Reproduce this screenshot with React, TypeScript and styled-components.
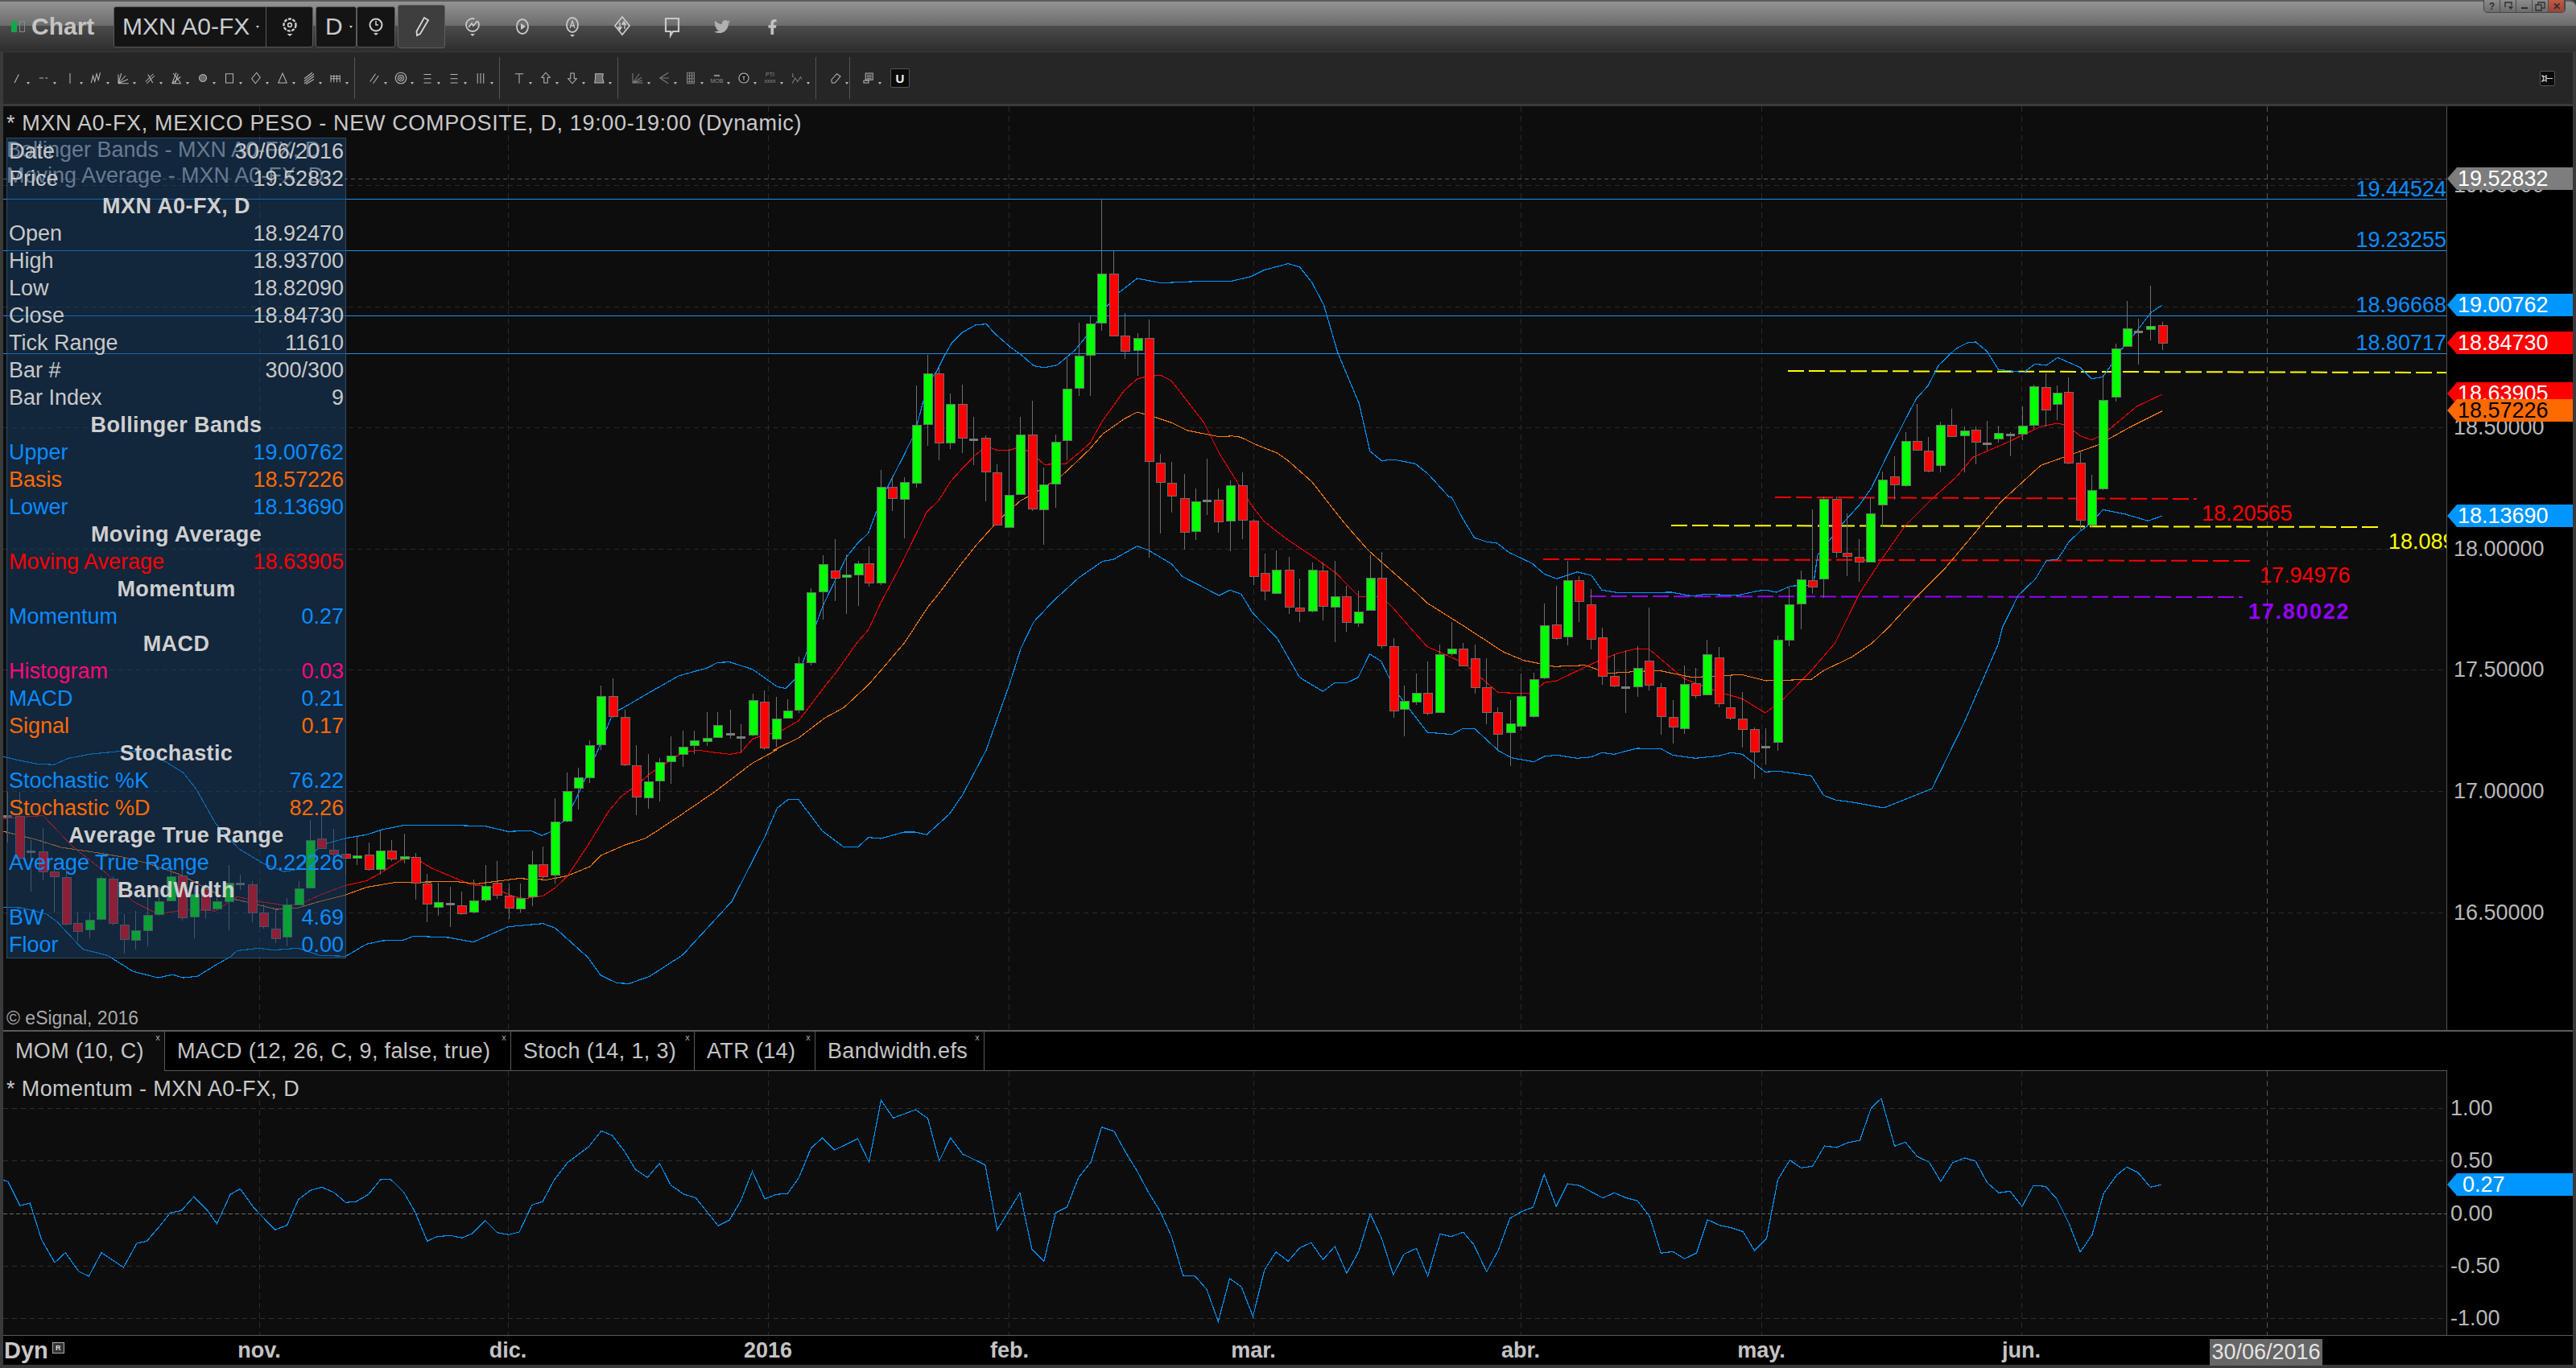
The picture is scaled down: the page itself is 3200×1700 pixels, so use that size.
import React from 'react';
import styled, { createGlobalStyle } from 'styled-components';
import { FaTwitter, FaFacebookF } from 'react-icons/fa';

const Global = createGlobalStyle`
  html, body { margin: 0; padding: 0; background: #3a3a3a; }
  body { font-family: "Liberation Sans", Arial, sans-serif; }
`;

/* ---------- chart data, read off in crops of the picture ---------- */
const seg = (x0: number, y0: number, sx: number, sy: number) => (p: number[]) => {
  const out: [number, number][] = [];
  for (let i = 0; i < p.length; i += 2) out.push([x0 + p[i] / sx, y0 + p[i + 1] / sy]);
  return out;
};
const zA = seg(0, 640, 2.24, 2.53);
const zB = seg(200, 820, 1.96, 3);
const zC = seg(960, 320, 1.867, 2.119);
const zD = seg(1500, 600, 1.96, 3);
const zE = seg(2100, 340, 1.425, 3);
const zF = seg(0, 1250, 1.206, 3);
const zG = seg(1290, 1340, 2.45, 3);
const zH = seg(1900, 1250, 1.206, 3);
const pts = (a: [number, number][]) => a.map(([x, y]) => `${x.toFixed(1)},${y.toFixed(1)}`).join(' ');

const upper = pts([
  ...zA([10,760,40,768,100,782,150,785,190,765,250,752,340,742,400,745,460,775,510,810,545,860,600,970]),
  ...zB([190,705,250,760,300,790,335,780,390,690,450,665,500,652,540,632,590,617,720,617,790,620,845,640,900,637,928,655,950,640,985,595,1010,520,1060,350,1100,200,1130,175,1180,130,1260,60,1330,30,1355,10,1385,8,1440,35,1500,100]),
  ...zC([30,1135,60,1100,90,1000,115,920,170,790,195,755,222,725,250,640,300,530,330,460,360,330,380,300,400,255,415,225,440,197,470,178,495,175,515,200,550,235,580,260,605,285,630,290,660,283,700,245,740,190,770,135,800,95,845,55,900,67,1000,62,1065,62,1110,50,1140,33,1195,16,1222,25,1250,65,1278,125,1310,250,1360,385,1385,510,1412,535,1440,532,1490,543,1520,570,1568,630]),
  ...zD([595,55,620,130,650,205,680,220,705,225,735,260,790,300,820,340,850,358,900,332,935,345,960,400,1000,410,1130,408,1180,422,1215,415,1290,420,1340,403,1360,400,1385,408,1420,385,1475,380]),
  ...zE([225,1050,270,930,300,860,320,800,350,670,380,545,400,465,420,420,440,340,470,280,490,258,505,255,525,290,545,358,590,368,610,337,630,342,650,313,690,350,710,392,730,385,745,340,760,290,790,215,815,145,835,118]),
]);
const lower = pts([
  ...zA([10,1233,60,1235,130,1255,160,1280,230,1365,300,1385,370,1435,440,1455,480,1445,510,1455,550,1450,600,1415,640,1390,660,1370,720,1362,760,1368,830,1362,890,1385]),
  ...zB([450,1105,500,1060,540,1047,590,1045,615,1030,700,1035,760,1052,845,995,930,983,960,1000,1040,1110,1070,1175,1110,1205,1140,1207,1190,1180,1270,1100,1360,950,1390,900,1470,660]),
  ...zC([10,1450,35,1428,60,1428,85,1465,115,1510,165,1553,197,1553,222,1527,250,1530,305,1513,330,1513,357,1520,410,1465,440,1415,495,1297,550,1120,575,1030,605,960,650,905,710,843,765,800,790,795,845,760,870,770,925,807,950,840,1035,890]),
  ...zD([55,400,82,415,110,485,170,580,224,725,281,778,310,745,340,745,367,725,395,638,423,665,440,720,465,790,535,930,595,938,622,916,650,916,708,998,740,1025,795,1040,820,1020,850,1015,900,1027,935,1022,960,1006,990,1012,1045,990,1105,992,1132,1015,1188,1027,1245,1018,1275,1006,1302,1012,1358,1078,1390,1075,1470,1092,1500,1165,1530,1183,1568,1190]),
  [2340,1004],[2400,980],[2440,898],
  ...zE([545,1380,552,1320,580,1200,610,1140,630,1070,650,1065,670,1000,690,960,710,930,730,880,770,897,810,922,835,903]),
]);
const maRed = pts([
  ...zA([0,955,120,945,200,1040,300,1130,370,1215,440,1255,520,1240,600,1245,660,1200,720,1215,780,1225,830,1225,900,1190,960,1165,1020,1150,1060,1125,1115,1085,1150,1075,1200,1110,1310,1162,1370,1170,1430,1200]),
  ...zB([885,890,930,880,960,850,990,805,1040,690,1090,565,1120,510,1160,465,1190,425,1230,385,1270,345,1310,337,1345,345,1385,352,1412,345,1440,295,1470,280,1510,265]),
  ...zC([60,1220,120,1130,145,1095,195,1015,222,980,250,910,297,810,357,670,385,640,412,590,440,555,470,520,495,497,520,507,550,507,575,498,605,520,630,545,680,543,735,490,765,430,815,350,845,320,870,313,900,310,925,325,1000,435,1035,515,1115,660,1140,695,1190,740,1250,785,1305,830,1360,893,1412,893,1440,925,1490,990,1518,1025,1568,1050]),
  ...zD([622,670,708,782,790,785,820,745,850,738,940,672,1000,635,1045,618,1075,620,1160,730,1245,780,1302,805,1358,858,1400,810,1470,700]),
  ...zE([255,1380,300,1190,340,1060,380,940,430,835,470,760,500,685,560,630,620,570,650,558,665,565,690,605,710,620,730,600,770,530,790,495,835,450]),
]);
const basis = pts([
  ...zA([10,995,100,1020,170,1045,260,1060,340,1075,410,1095,500,1130,620,1200,680,1215,770,1240,830,1235,890,1215,960,1195,1020,1170,1100,1155,1250,1153]),
  ...zB([720,827,770,835,870,815,940,820,990,805,1045,770,1070,730,1130,690,1180,665,1240,605,1350,490,1440,385,1500,335]),
  ...zC([0,1298,60,1265,120,1213,165,1185,222,1125,260,1075,305,1015,360,920,385,885,435,810,470,760,525,690,575,640,600,625,665,580,735,505,765,465,815,425,845,407,885,420,925,435,960,455,1035,472,1065,470,1085,473,1115,490,1170,515,1195,535,1250,590,1305,670,1330,705,1380,770,1440,830,1490,880,1518,910]),
  ...zD([620,530,720,630,770,662,845,685,920,680,975,710,1050,703,1100,700,1180,725,1300,715,1360,738,1470,733,1500,700,1568,650]),
  ...zE([320,1380,350,1320,400,1205,450,1100,490,1000,550,850,620,715,680,670,720,640,780,570,835,512]),
]);
const momentum = pts([
  ...zF([5,650,12,655,30,745,45,735,62,870,82,957,98,920,118,990,133,1008,152,920,185,975,205,885,220,877,238,825,255,772,272,763,290,712,310,760,325,812,345,703,360,682,380,752,412,835,430,818,447,722,465,688,482,676,500,695,518,733,533,730,552,703,570,648,585,646,605,695,622,770,640,877,655,860,675,856,692,865,708,848,727,800,745,845,762,853,778,843,797,742,813,730,830,650,850,585,882,525,901,466,917,483,935,540,952,610,970,640,988,587,1005,668,1025,703,1042,715,1060,770,1076,820,1093,798,1110,725,1127,617,1146,720,1163,703,1180,700,1197,640,1215,530,1232,492,1250,538,1285,495,1302,583,1320,352,1338,418,1372,387,1390,420,1407,578,1424,492,1442,552,1476,593,1494,835,1528,697,1546,908]),
  ...zG([17,682,52,502,87,480,122,370,160,312,192,182,230,197,265,275,300,345,335,425,370,495,405,590,440,735,477,738,512,787,547,907,582,746,618,778,653,888,688,715,723,647,760,682,795,632,830,613,866,676,902,626,938,727,975,645,1010,505,1045,598,1080,733,1113,655,1150,634,1185,737,1222,580,1255,590,1293,574,1325,620,1364,721,1400,640,1435,522,1470,497,1505,481]),
  ...zH([22,628,40,748,57,663,75,670,110,716,127,697,145,716,162,727,180,785,197,922,215,916,232,943,250,922,267,797,285,818,302,827,320,842,337,912,355,868,372,648,390,575,407,604,424,598,442,522,460,528,477,510,495,501,512,380,527,345,547,523,563,508,581,562,599,583,616,655,634,585,652,567,668,578,686,660,703,697,720,691,738,748,755,670,773,673,790,720,808,810,825,918,843,853,860,700,880,630,895,601,912,622,930,676,947,667]),
]);

/* each candle: x, body top, body bottom, wick top, wick bottom, kind */
type Raw = [number, number, number, number, number, 'G' | 'R' | 'D'];
type Candle = { x: number; t: number; b: number; h: number; l: number; k: 'G' | 'R' | 'D' };
const cs = (x0: number, y0: number, sx: number, sy: number, raw: Raw[]): Candle[] =>
  raw.map(([x, t, b, h, l, k]) => ({ x: x0 + x / sx, t: y0 + t / sy, b: y0 + b / sy, h: y0 + h / sy, l: y0 + l / sy, k }));

const candles: Candle[] = [
  ...cs(0, 640, 2.24, 2.53, [
    [20,945,945,870,1030,'D'],[53,947,1080,870,1085,'R'],[86,1058,1058,1020,1185,'D'],[118,1058,1122,985,1148,'R'],[151,1123,1137,1095,1250,'R'],[183,1140,1286,1100,1290,'R'],[216,1283,1309,1250,1340,'R'],[248,1273,1303,1250,1330,'G'],[281,1142,1272,1135,1275,'G'],[313,1145,1285,1135,1290,'R'],[345,1288,1334,1255,1380,'R'],[377,1306,1336,1245,1365,'G'],[409,1258,1308,1195,1355,'G'],[442,1215,1255,1170,1260,'G'],[474,1137,1213,1105,1215,'G'],[507,1134,1266,1100,1275,'R'],[539,1192,1263,1170,1330,'G'],[571,1177,1240,1160,1270,'R'],[603,1215,1238,1190,1240,'G'],[636,1157,1215,1100,1305,'G'],[668,1158,1158,1130,1180,'D'],[702,1162,1252,1150,1280,'R'],[733,1250,1295,1225,1300,'R'],[765,1301,1331,1240,1345,'R'],[798,1226,1326,1205,1357,'G'],[830,1174,1225,1150,1228,'G'],[863,1023,1172,960,1175,'G'],
  ]),
  ...cs(200, 820, 1.96, 3, [
    [391,667,703,565,705,'R'],[420,709,725,630,745,'R'],[448,724,739,680,800,'R'],[477,731,737,655,765,'G'],[505,727,781,680,785,'R'],[534,712,781,635,800,'G'],[561,712,743,672,750,'R'],[591,734,742,648,760,'G'],[619,737,832,720,895,'R'],[646,835,910,798,978,'R'],[675,904,922,830,955,'G'],[703,908,908,847,995,'D'],[732,916,946,865,950,'R'],[760,899,940,818,945,'G'],[789,845,895,765,902,'G'],[817,832,877,750,890,'R'],[846,880,925,835,965,'R'],[874,890,928,835,942,'G'],[903,764,884,710,918,'G'],[930,764,808,695,815,'R'],[959,605,802,515,835,'G'],[987,491,601,420,605,'G'],[1016,439,478,402,558,'G'],[1043,320,438,300,458,'G'],[1071,136,316,97,335,'G'],[1100,137,211,70,215,'R'],[1128,214,391,185,395,'R'],[1157,394,511,318,578,'R'],[1185,454,514,350,555,'G'],[1214,383,451,365,528,'G'],[1241,358,379,285,462,'G'],[1270,325,352,265,398,'G'],[1298,302,319,265,350,'G'],[1328,292,304,195,320,'G'],[1355,244,288,195,290,'G'],[1385,275,275,185,295,'D'],[1412,287,287,240,345,'D'],[1440,152,280,127,285,'G'],[1469,157,328,115,335,'R'],[1497,220,295,138,325,'G'],[1525,190,217,147,220,'G'],
  ]),
  ...cs(960, 320, 1.867, 2.119, [
    [60,1069,1192,1050,1200,'G'],[88,882,1067,870,1075,'G'],[115,808,880,785,953,'G'],[143,825,844,742,905,'R'],[169,836,842,782,938,'G'],[197,806,836,798,917,'G'],[223,806,857,760,866,'R'],
  ]),
  ...cs(600, 230, 1.568, 3, [
    [775,1127,1483,1062,1490,'G'],[797,1127,1168,1085,1215,'R'],[820,1108,1171,1090,1316,'G'],[843,896,1111,748,1128,'G'],[865,703,892,633,971,'G'],[888,703,961,680,1025,'R'],[910,817,961,778,983,'G'],[933,817,943,744,998,'R'],[955,947,947,865,1043,'D'],[979,943,1069,933,1180,'R'],[1001,1072,1267,1040,1270,'R'],[1024,1156,1276,985,1276,'G'],[1046,931,1153,865,1153,'G'],[1070,931,1207,805,1215,'R'],[1092,1117,1210,1053,1340,'G'],[1115,958,1114,930,1203,'G'],[1137,760,952,640,1025,'G'],[1160,637,757,513,785,'G'],[1183,517,634,490,785,'G'],[1205,331,514,52,543,'G'],[1228,331,562,245,565,'R'],[1250,562,619,478,648,'R'],[1274,571,616,553,710,'G'],[1296,571,1030,502,1390,'R'],[1319,1036,1108,1003,1300,'R'],[1341,1111,1159,1033,1220,'R'],[1365,1168,1294,1078,1358,'R'],[1387,1180,1291,1132,1322,'G'],[1410,1176,1176,1020,1230,'D'],[1432,1175,1255,1130,1295,'R'],[1455,1120,1252,1100,1365,'G'],[1478,1120,1248,1072,1320,'R'],[1500,1252,1460,1245,1490,'R'],
  ]),
  ...cs(1500, 600, 1.96, 3, [
    [139,337,403,265,437,'R'],[167,325,412,252,412,'G'],[197,325,463,276,488,'R'],[224,466,479,357,518,'R'],[254,325,479,297,482,'G'],[281,328,460,297,512,'R'],[310,424,463,291,593,'G'],[338,424,520,384,554,'R'],[367,482,523,403,537,'G'],[395,355,475,266,478,'G'],[424,355,607,258,617,'R'],[452,610,850,578,875,'R'],[479,814,844,756,944,'G'],[508,784,817,711,828,'G'],[536,784,859,667,868,'R'],[565,640,856,603,856,'G'],[593,619,637,519,644,'G'],[622,619,682,598,684,'R'],[650,655,763,603,785,'R'],[679,763,856,654,900,'R'],[706,856,937,838,998,'R'],[736,898,931,810,1055,'G'],[763,796,907,710,924,'G'],[793,733,871,708,875,'G'],[820,532,727,450,732,'G'],[848,529,580,385,584,'R'],[877,364,574,290,605,'G'],[904,364,442,348,518,'R'],[933,454,583,396,620,'R'],[961,577,721,541,752,'R'],[990,721,757,640,763,'R'],[1018,762,762,625,857,'D'],[1047,691,760,610,797,'G'],[1075,664,754,465,773,'R'],[1104,763,871,747,938,'R'],[1132,874,910,810,971,'R'],[1161,751,916,681,935,'G'],[1188,748,793,690,805,'R'],[1216,640,790,586,790,'G'],[1245,652,823,613,836,'R'],[1272,838,877,716,884,'R'],[1302,880,919,781,986,'R'],[1330,919,1003,913,1103,'R'],[1359,984,984,915,1050,'D'],[1387,586,967,570,998,'G'],[1415,454,586,388,608,'G'],[1444,361,451,327,547,'G'],[1472,364,388,98,415,'R'],[1500,61,358,50,428,'G'],[1530,61,259,50,280,'R'],[1557,262,274,115,347,'R'],
  ]),
  ...cs(2100, 340, 1.425, 3, [
    [298,1057,1075,990,1150,'R'],[318,895,1075,835,1078,'G'],[339,769,863,738,942,'G'],[360,757,787,682,842,'R'],[380,625,790,590,795,'G'],[401,625,658,485,660,'R'],[421,661,737,610,740,'R'],[442,565,715,552,742,'G'],[462,565,607,505,610,'R'],[484,586,604,570,740,'G'],[504,584,628,570,710,'R'],[525,632,632,548,660,'D'],[545,595,616,567,630,'G'],[566,600,600,590,680,'D'],[587,568,598,495,620,'G'],[607,421,565,415,580,'G'],[628,424,508,372,570,'R'],[648,445,487,418,545,'G'],[669,442,706,388,710,'R'],[690,706,918,665,955,'R'],[710,808,937,750,945,'G'],[730,472,802,378,808,'G'],[752,280,460,260,478,'G'],[772,205,271,102,272,'G'],[793,215,215,168,340,'D'],[813,196,208,45,250,'G'],[835,193,259,180,285,'R'],
  ]),
];

const gridY = [230, 381, 531, 682, 832, 983, 1134];
const gridX = [322, 631, 954, 1253, 1557, 1889, 2188, 2511];
const fibY = [247, 311, 392, 439];
const momGridY = [1377, 1442, 1573, 1638];

type Dash = { x1: number; y1: number; x2: number; y2: number; c: string };
const dashes: Dash[] = [
  { x1: 2221, y1: 461, x2: 3039, y2: 463, c: '#ffff00' },
  { x1: 2076, y1: 653, x2: 2955, y2: 655, c: '#ffff00' },
  { x1: 2205, y1: 618, x2: 2729, y2: 620, c: '#ff0000' },
  { x1: 1917, y1: 695, x2: 2795, y2: 697, c: '#ff0000' },
  { x1: 1975, y1: 741, x2: 2786, y2: 742, c: '#9600ff' },
];
type Note = { t: string; x: number; y: number; c: string; b?: boolean; end?: boolean };
const notes: Note[] = [
  { t: '19.44524', x: 3039, y: 235, c: '#0a8cff', end: true },
  { t: '19.23255', x: 3039, y: 298, c: '#0a8cff', end: true },
  { t: '18.96668', x: 3039, y: 379, c: '#0a8cff', end: true },
  { t: '18.80717', x: 3039, y: 426, c: '#0a8cff', end: true },
  { t: '18.20565', x: 2735, y: 638, c: '#ff0000' },
  { t: '18.08953', x: 2967, y: 673, c: '#ffff00' },
  { t: '17.94976', x: 2807, y: 715, c: '#ff0000' },
  { t: '17.80022', x: 2793, y: 760, c: '#9600ff', b: true },
];

const priceLabels: [string, number][] = [['19.50000', 230], ['19.00000', 381], ['18.50000', 531], ['18.00000', 682], ['17.50000', 832], ['17.00000', 983], ['16.50000', 1134]];
const priceTags: { t: string; y: number; bg: string; fg: string }[] = [
  { t: '19.52832', y: 222, bg: '#7d7d7d', fg: '#ffffff' },
  { t: '19.00762', y: 379, bg: '#0096ff', fg: '#ffffff' },
  { t: '18.84730', y: 426, bg: '#ff0000', fg: '#ffffff' },
  { t: '18.63905', y: 489, bg: '#ff0000', fg: '#ffffff' },
  { t: '18.57226', y: 510, bg: '#ff6a00', fg: '#000000' },
  { t: '18.13690', y: 641, bg: '#0096ff', fg: '#ffffff' },
];
const momLabels: [string, number][] = [['1.00', 1377], ['0.50', 1442], ['0.00', 1508], ['-0.50', 1573], ['-1.00', 1638]];
const months: [string, number][] = [['nov.', 322], ['dic.', 631], ['2016', 954], ['feb.', 1254], ['mar.', 1557], ['abr.', 1889], ['may.', 2188], ['jun.', 2511]];

type RowKind = { kind: 'h'; label: string } | { kind: 'r'; label: string; value: string; color?: string };
const BLUE = '#0a8cff', ORG = '#ff6a00', RED = '#ff0000', PINK = '#ff0a78';
const rows: RowKind[] = [
  { kind: 'r', label: 'Date', value: '30/06/2016' },
  { kind: 'r', label: 'Price', value: '19.52832' },
  { kind: 'h', label: 'MXN A0-FX, D' },
  { kind: 'r', label: 'Open', value: '18.92470' },
  { kind: 'r', label: 'High', value: '18.93700' },
  { kind: 'r', label: 'Low', value: '18.82090' },
  { kind: 'r', label: 'Close', value: '18.84730' },
  { kind: 'r', label: 'Tick Range', value: '11610' },
  { kind: 'r', label: 'Bar #', value: '300/300' },
  { kind: 'r', label: 'Bar Index', value: '9' },
  { kind: 'h', label: 'Bollinger Bands' },
  { kind: 'r', label: 'Upper', value: '19.00762', color: BLUE },
  { kind: 'r', label: 'Basis', value: '18.57226', color: ORG },
  { kind: 'r', label: 'Lower', value: '18.13690', color: BLUE },
  { kind: 'h', label: 'Moving Average' },
  { kind: 'r', label: 'Moving Average', value: '18.63905', color: RED },
  { kind: 'h', label: 'Momentum' },
  { kind: 'r', label: 'Momentum', value: '0.27', color: BLUE },
  { kind: 'h', label: 'MACD' },
  { kind: 'r', label: 'Histogram', value: '0.03', color: PINK },
  { kind: 'r', label: 'MACD', value: '0.21', color: BLUE },
  { kind: 'r', label: 'Signal', value: '0.17', color: ORG },
  { kind: 'h', label: 'Stochastic' },
  { kind: 'r', label: 'Stochastic %K', value: '76.22', color: BLUE },
  { kind: 'r', label: 'Stochastic %D', value: '82.26', color: ORG },
  { kind: 'h', label: 'Average True Range' },
  { kind: 'r', label: 'Average True Range', value: '0.22226', color: BLUE },
  { kind: 'h', label: 'BandWidth' },
  { kind: 'r', label: 'BW', value: '4.69', color: BLUE },
  { kind: 'r', label: 'Floor', value: '0.00', color: BLUE },
];

const tabs: { t: string; w: number; active?: boolean }[] = [
  { t: 'MOM (10, C)', w: 201, active: true },
  { t: 'MACD (12, 26, C, 9, false, true)', w: 430 },
  { t: 'Stoch (14, 1, 3)', w: 228 },
  { t: 'ATR (14)', w: 150 },
  { t: 'Bandwidth.efs', w: 210 },
];

/* ---------- window ---------- */
const Window = styled.div`
  width: 3200px;
  height: 1700px;
  background: #3a3a3a;
  overflow: hidden;
  display: flex;
  flex-direction: column;
  color: #c8c8c8;
  font: 27px/1 "Liberation Sans", Arial, sans-serif;
`;
const TitleBar = styled.header`
  flex: 0 0 62px;
  height: 62px;
  border-top: 2px solid #5c5c5c;
  border-top-right-radius: 8px;
  background: linear-gradient(#939393 0, #6c6c6c 30px, #4b4b4b 30px, #2d2d2d 62px);
  display: flex;
  align-items: center;
  padding-left: 14px;
`;
const Led = styled.span<{ $on?: boolean }>`
  width: 7px;
  height: 14px;
  margin-right: 3px;
  background: ${(p) => (p.$on ? '#12a84a' : 'transparent')};
  border: 1px solid ${(p) => (p.$on ? '#12a84a' : '#8a8a8a')};
  box-sizing: border-box;
`;
const AppName = styled.span`
  font: bold 30px/1 "Liberation Sans", Arial, sans-serif;
  color: #c4c4c4;
  margin: 0 22px 0 5px;
  width: 80px;
`;
const DarkBox = styled.div<{ $w: number; $ml?: number }>`
  width: ${(p) => p.$w}px;
  height: 51px;
  margin-left: ${(p) => p.$ml ?? 0}px;
  box-sizing: border-box;
  background: #141414;
  border: 1px solid #5a5a5a;
  border-radius: 3px;
  display: flex;
  align-items: center;
  position: relative;
  font-size: 30px;
  color: #c8ccd0;
`;
const BoxLabel = styled.span<{ $w: number; $pl: number; $plain?: boolean }>`
  width: ${(p) => p.$w}px;
  padding-left: ${(p) => p.$pl}px;
  box-sizing: border-box;
  height: 100%;
  display: flex;
  align-items: center;
  border-right: ${(p) => (p.$plain ? '0' : '1px solid #5a5a5a')};
`;
const BoxIcon = styled.span`
  flex: 1;
  display: flex;
  align-items: center;
  justify-content: center;
  position: relative;
`;
const Caret = styled.i`
  display: inline-block;
  margin-left: 8px;
  width: 0;
  height: 0;
  border-left: 2.5px solid transparent;
  border-right: 2.5px solid transparent;
  border-top: 3px solid #d0d0d0;
`;
const PencilBox = styled.div`
  width: 59px;
  height: 54px;
  margin: 0 3px;
  box-sizing: border-box;
  background: #3e3e3e;
  border: 1px solid #5e5e5e;
  border-radius: 3px;
  display: flex;
  align-items: center;
  justify-content: center;
`;
const TitleIcon = styled.span`
  width: 62px;
  height: 40px;
  display: flex;
  align-items: center;
  justify-content: center;
  color: #c0c0c0;
`;
const WinButtons = styled.div`
  margin-left: auto;
  margin-right: 13px;
  align-self: flex-start;
  display: flex;
  height: 15px;
  margin-top: -2px;
  border: 1px solid #444;
  border-top: 0;
  border-radius: 0 0 5px 5px;
  overflow: hidden;
`;
const WinButton = styled.span<{ $close?: boolean }>`
  width: 20px;
  height: 15px;
  box-sizing: border-box;
  border-right: 1px solid #4c4c4c;
  background: ${(p) => (p.$close ? 'linear-gradient(#c05a48,#9a4536)' : 'linear-gradient(#8c8c8c,#6c6c6c)')};
  color: #2e2e2e;
  display: flex;
  align-items: center;
  justify-content: center;
  font: bold 12px/1 "Liberation Sans", Arial, sans-serif;
`;
const ToolBar = styled.nav`
  flex: 0 0 64px;
  margin: 1px 4px 0 4px;
  background: #262626;
  display: flex;
  align-items: center;
`;
const ToolCell = styled.span<{ $dim?: boolean }>`
  width: 33px;
  height: 40px;
  flex: none;
  display: flex;
  align-items: center;
  justify-content: center;
  position: relative;
  color: ${(p) => (p.$dim ? '#7c7c7c' : '#b4b4b4')};
  &::after {
    content: '';
    position: absolute;
    right: 0;
    bottom: 12px;
    border-left: 2.5px solid transparent;
    border-right: 2.5px solid transparent;
    border-top: 3px solid #b8b8b8;
  }
`;
const Sep = styled.span<{ $tight?: boolean }>`
  width: 1px;
  height: 52px;
  background: #555;
  flex: none;
  margin: ${(p) => (p.$tight ? '0 6px 0 1px' : '0 7px')};
`;
const UBox = styled.span`
  width: 24px;
  height: 24px;
  margin-left: 11px;
  box-sizing: border-box;
  background: #0a0a0a;
  border: 1px solid #555;
  border-radius: 2px;
  color: #eee;
  display: flex;
  align-items: center;
  justify-content: center;
  font: bold 15px/1 "Liberation Sans", Arial, sans-serif;
`;
const PinBox = styled.span`
  width: 19px;
  height: 19px;
  margin: 0 22px 0 auto;
  box-sizing: border-box;
  background: #0a0a0a;
  border: 1px solid #555;
  border-radius: 2px;
  display: flex;
  align-items: center;
  justify-content: center;
`;
const Body = styled.main`
  flex: 1;
  margin: 3px 4px 3px 4px;
  display: flex;
  flex-direction: column;
  min-height: 0;
`;
const PaneRow = styled.section<{ $h: number }>`
  height: ${(p) => p.$h}px;
  flex: none;
  display: flex;
`;
const Plot = styled.div`
  width: 3036px;
  flex: none;
  position: relative;
  background: #0d0d0d;
  border-right: 1px solid #565656;
  box-sizing: border-box;
  overflow: hidden;
`;
const PlotSvg = styled.svg`
  display: block;
  position: absolute;
  left: 0;
  top: 0;
`;
const PlotTitle = styled.div<{ $dim?: boolean; $ls?: number }>`
  position: absolute;
  left: 4px;
  white-space: nowrap;
  letter-spacing: ${(p) => p.$ls ?? 0}px;
  color: ${(p) => (p.$dim ? '#b4b4b4' : '#c8c8c8')};
`;
const Legend = styled.div`
  position: absolute;
  left: 4px;
  top: 1122px;
  font-size: 23px;
  color: #a8a8a8;
`;
const Panel = styled.aside`
  position: absolute;
  left: 4px;
  top: 39px;
  width: 422px;
  box-sizing: border-box;
  background: rgba(23, 63, 107, 0.5);
  box-shadow: inset 0 0 0 1px rgba(70, 110, 140, 0.55);
  display: flex;
  flex-direction: column;
`;
const PanelRow = styled.div<{ $color?: string }>`
  height: 34px;
  flex: none;
  padding: 0 3px;
  display: flex;
  align-items: center;
  justify-content: space-between;
  color: ${(p) => p.$color ?? '#c8c8c8'};
`;
const PanelHead = styled.div`
  height: 34px;
  flex: none;
  display: flex;
  align-items: center;
  justify-content: center;
  font-weight: bold;
  letter-spacing: 0.4px;
  color: #cfcfcf;
`;
const Axis = styled.div`
  width: 156px;
  flex: none;
  position: relative;
  background: #000;
  overflow: hidden;
`;
const AxisLabel = styled.span<{ $left: number }>`
  position: absolute;
  left: ${(p) => p.$left}px;
  color: #b8b8b8;
  transform: translateY(-50%);
  white-space: nowrap;
`;
const Tag = styled.span<{ $bg: string; $fg: string; $pl: number }>`
  position: absolute;
  left: 0;
  width: 156px;
  height: 28px;
  box-sizing: border-box;
  padding-left: ${(p) => p.$pl}px;
  background: ${(p) => p.$bg};
  color: ${(p) => p.$fg};
  display: flex;
  align-items: center;
  transform: translateY(-50%);
  clip-path: polygon(0 50%, 12px 0, 100% 0, 100% 100%, 12px 100%);
`;
const TabRow = styled.div`
  height: 51px;
  flex: none;
  border-top: 2px solid #5a5a5a;
  box-sizing: border-box;
  display: flex;
  background: #000;
`;
const TabStrip = styled.div`
  width: 3036px;
  flex: none;
  display: flex;
  border-bottom: 1px solid #5a5a5a;
  box-sizing: border-box;
`;
const Tab = styled.div<{ $w: number; $active?: boolean }>`
  width: ${(p) => p.$w}px;
  flex: none;
  box-sizing: border-box;
  padding-left: 15px;
  height: ${(p) => (p.$active ? '49px' : '48px')};
  display: flex;
  align-items: center;
  position: relative;
  letter-spacing: 0.35px;
  background: ${(p) => (p.$active ? '#0d0d0d' : '#000')};
  border-right: 1px solid #5a5a5a;
  color: #c4c4c4;
`;
const TabClose = styled.i`
  position: absolute;
  right: 5px;
  top: 2px;
  font: normal 11px/1 "Liberation Sans", Arial, sans-serif;
  color: #aaa;
`;
const TimeAxis = styled.footer`
  height: 37px;
  flex: none;
  border-top: 1px solid #5a5a5a;
  box-sizing: border-box;
  background: #000;
  position: relative;
  display: flex;
  align-items: center;
`;
const Dyn = styled.span`
  font: bold 29px/1 "Liberation Sans", Arial, sans-serif;
  color: #c8c8c8;
  margin-left: 1px;
`;
const DynIcon = styled.span`
  width: 15px;
  height: 14px;
  margin: -6px 0 0 5px;
  box-sizing: border-box;
  border: 1px solid #aaa;
  background: #333;
  color: #ddd;
  font: bold 9px/12px "Liberation Sans", Arial, sans-serif;
  text-align: center;
`;
const Month = styled.span`
  position: absolute;
  top: 5px;
  transform: translateX(-50%);
  font: bold 27px/1 "Liberation Sans", Arial, sans-serif;
  color: #c4c4c4;
`;
const DateTag = styled.span`
  position: absolute;
  left: 2741px;
  top: 4px;
  width: 140px;
  height: 33px;
  background: #666;
  color: #e4e4e4;
  display: flex;
  align-items: center;
  justify-content: center;
`;

/* ---------- icons ---------- */
const Ico: React.FC<{ d: string; s?: number; fill?: string }> = ({ d, s = 18, fill = 'none' }) => (
  <svg width={s} height={s} viewBox="0 0 24 24" fill={fill} stroke="currentColor" strokeWidth="1.4">
    <path d={d} />
  </svg>
);
const group1 = [
  'M8 20L15 6', 'M5 12H12M15 12H19', 'M12 4V21', 'M3 20L6 8L9 18L12 5L15 15L18 3', 'M4 21L9 4M4 21L16 8M4 21L20 14M4 21H21M4 21V6',
  'M5 18L18 5M7 21L20 8M9 6L17 20', 'M5 21L12 3M5 21L19 10M5 21H20M7 4L19 20M10 21L15 5', 'M12 6a6 6 0 1 0 .01 0Z', 'M6 5H18V20H6Z', 'M13 3L19 11L11 21L5 13Z',
  'M12 4L19 20H5Z', 'M4 13L17 3M4 17L20 5M4 21L20 9M7 22L20 14', 'M4 7V19M9 7V19M14 7V19M19 7V19M4 9H19M4 13H19',
];
const group2 = ['M5 18L14 5M10 21L19 8', 'M12 3a9 9 0 1 0 .01 0ZM12 7a5 5 0 1 0 .01 0ZM12 10a2 2 0 1 0 .01 0Z', 'M6 6H18M6 13H18M6 20H18', 'M6 6H18M6 13H18M6 20H18', 'M7 4V21M12 4V21M17 4V21'];
const group3 = ['M5 5H19M12 5V21', 'M12 3L19 11H15V20H9V11H5Z', 'M12 21L19 13H15V4H9V13H5Z', 'M6 5H19L18 12L20 20H5L6 12Z'];
const group4 = ['M4 4V20H21M4 20L19 11M4 20L15 5M4 20L20 16', 'M19 3L5 12L19 21M5 12L20 12', 'M6 3H18V21H6ZM6 8H18M6 13H18M6 18H18M10 3V21M14 3V21'];

const ToolIcon: React.FC<{ d: string; fill?: string; dim?: boolean }> = ({ d, fill, dim }) => (
  <ToolCell $dim={dim}>
    <Ico d={d} fill={fill} />
  </ToolCell>
);
const MiniText = styled.span`
  font: 7px/8px "Liberation Sans", Arial, sans-serif;
  color: #8a8a8a;
  text-align: center;
  white-space: pre;
`;

const Clock = () => (
  <svg width="22" height="28" viewBox="0 0 22 28" fill="none" stroke="#cfcfcf" strokeWidth="2">
    <circle cx="11" cy="12" r="7.5" />
    <path d="M11 7V12H14" strokeWidth="1.5" />
    <path d="M8 22H14L11 25Z" fill="#cfcfcf" stroke="none" />
  </svg>
);
const Gear = () => (
  <svg width="24" height="30" viewBox="0 0 24 30" fill="none" stroke="#cfcfcf" strokeWidth="2.4">
    <circle cx="12" cy="13" r="7.5" strokeDasharray="4 1.5" />
    <circle cx="12" cy="13" r="2.4" strokeWidth="1.6" />
    <path d="M8.5 24H15.5L12 27Z" fill="#cfcfcf" stroke="none" />
  </svg>
);

const LINE_BLUE = '#0096ff';

export default function App() {
  return (
    <Window>
      <Global />
      <TitleBar>
        <Led $on />
        <Led />
        <AppName>Chart</AppName>
        <DarkBox $w={248}>
          <BoxLabel $w={189} $pl={10}>MXN A0-FX<Caret /></BoxLabel>
          <BoxIcon><Gear /></BoxIcon>
        </DarkBox>
        <DarkBox $w={51} $ml={3}>
          <BoxLabel $w={50} $pl={11} $plain>D<Caret /></BoxLabel>
        </DarkBox>
        <DarkBox $w={48}><BoxIcon><Clock /></BoxIcon></DarkBox>
        <PencilBox>
          <svg width="22" height="28" viewBox="0 0 22 28" fill="none" stroke="#d6d6d6" strokeWidth="1.8">
            <path d="M14 3L19 6L9 23L5 25L4.5 20Z" />
          </svg>
        </PencilBox>
        <TitleIcon>
          <svg width="24" height="30" viewBox="0 0 24 30" fill="none" stroke="#c8c8c8" strokeWidth="1.8">
            <circle cx="12" cy="13" r="8" strokeDasharray="40 5" />
            <path d="M7 16L11 11L13 14L18 8" />
            <path d="M9 24H15L12 27Z" fill="#c8c8c8" stroke="none" />
          </svg>
        </TitleIcon>
        <TitleIcon>
          <svg width="24" height="26" viewBox="0 0 24 26" fill="none" stroke="#c8c8c8" strokeWidth="1.8">
            <ellipse cx="12" cy="13" rx="7" ry="9" />
            <path d="M10 9L16 13L10 17Z" fill="#c8c8c8" stroke="none" />
          </svg>
        </TitleIcon>
        <TitleIcon>
          <svg width="24" height="30" viewBox="0 0 24 30" fill="none" stroke="#c8c8c8" strokeWidth="1.8">
            <ellipse cx="12" cy="13" rx="7" ry="9" />
            <path d="M9 17L12 8L15 17M10 14H14" strokeWidth="1.3" />
            <path d="M9 25H15L12 28Z" fill="#c8c8c8" stroke="none" />
          </svg>
        </TitleIcon>
        <TitleIcon>
          <svg width="24" height="30" viewBox="0 0 24 30" fill="none" stroke="#c8c8c8" strokeWidth="1.8">
            <path d="M12 3L21 14L12 25L3 14Z" />
            <path d="M9 18V10M14 9L16 12H12ZM9 19L7 16H11ZM15 18V10" fill="#c8c8c8" strokeWidth="1.4" />
          </svg>
        </TitleIcon>
        <TitleIcon>
          <svg width="24" height="30" viewBox="0 0 24 30" fill="none" stroke="#c8c8c8" strokeWidth="2.2">
            <path d="M4 5H20V21H13L10 26V21H4Z" />
          </svg>
        </TitleIcon>
        <TitleIcon><FaTwitter size={20} color="#b0b0b0" /></TitleIcon>
        <TitleIcon><FaFacebookF size={19} color="#c0c0c0" /></TitleIcon>
        <WinButtons>
          <WinButton>?</WinButton>
          <WinButton>
            <svg width="12" height="11" viewBox="0 0 12 11" fill="none" stroke="#2e2e2e" strokeWidth="1.4">
              <path d="M2 7V1H10V5" /><path d="M6 6H12L9 10Z" fill="#2e2e2e" stroke="none" />
            </svg>
          </WinButton>
          <WinButton>
            <svg width="12" height="11" viewBox="0 0 12 11"><path d="M2 8H10" stroke="#2e2e2e" strokeWidth="2" /></svg>
          </WinButton>
          <WinButton>
            <svg width="13" height="12" viewBox="0 0 13 12" fill="none" stroke="#2e2e2e" strokeWidth="1.3">
              <path d="M1 4H8V11H1ZM4 4V1H12V8H8" />
            </svg>
          </WinButton>
          <WinButton $close>✕</WinButton>
        </WinButtons>
      </TitleBar>

      <ToolBar>
        {group1.map((d, i) => (
          <ToolIcon key={i} d={d} fill={i === 7 ? '#6a6a6a' : undefined} />
        ))}
        <Sep />
        {group2.map((d, i) => <ToolIcon key={i} d={d} />)}
        <Sep />
        {group3.map((d, i) => <ToolIcon key={i} d={d} fill={i === 3 ? '#6a6a6a' : undefined} />)}
        <Sep />
        {group4.map((d, i) => <ToolIcon key={i} d={d} dim fill={i === 2 ? '#333' : undefined} />)}
        <ToolCell><MiniText>{'▬\nMOB'}</MiniText></ToolCell>
        <ToolIcon d="M12 4a8 8 0 1 0 .01 0ZM10 10H14M12 10V16" fill="#1a1a1a" />
        <ToolCell><MiniText>{'PTI\nxxxx'}</MiniText></ToolCell>
        <ToolIcon d="M5 4V10H7M4 21L9 12L13 18L18 10L20 14" dim />
        <Sep />
        <ToolIcon d="M5 15L14 5L20 9L11 20H6Z" />
        <Sep $tight />
        <ToolIcon d="M7 4H19V15H7ZM9 7H17M9 10H17M9 13H17M4 16H12V20H4Z" />
        <UBox>U</UBox>
        <PinBox>
          <svg width="15" height="11" viewBox="0 0 15 11" fill="none" stroke="#d0d0d0" strokeWidth="1.2">
            <path d="M1 2L6 4V7L1 9L3 5.5ZM6 5.5H14M6 1V10" />
          </svg>
        </PinBox>
      </ToolBar>

      <Body>
        <PaneRow $h={1148}>
          <Plot>
            <PlotSvg width={3036} height={1148} viewBox="4 132 3036 1148">
              {gridY.map((y) => <line key={y} x1={4} x2={3040} y1={y} y2={y} stroke="#2a2a2a" strokeWidth="1" strokeDasharray="6 5" shapeRendering="crispEdges" />)}
              {gridX.map((x) => <line key={x} x1={x} x2={x} y1={132} y2={1280} stroke="#2a2a2a" strokeWidth="1" strokeDasharray="7 5" shapeRendering="crispEdges" />)}
              <line x1={2816} x2={2816} y1={132} y2={1280} stroke="#555" strokeWidth="1" strokeDasharray="7 5" shapeRendering="crispEdges" />
              <line x1={4} x2={3040} y1={222} y2={222} stroke="#5a5a5a" strokeWidth="1" strokeDasharray="5 4" shapeRendering="crispEdges" />
              {fibY.map((y) => <line key={y} x1={4} x2={3040} y1={y} y2={y} stroke="#1f8fe6" strokeWidth="1" shapeRendering="crispEdges" />)}
              {dashes.map((d, i) => <line key={i} {...d} stroke={d.c} strokeWidth="2" strokeDasharray="20 6" />)}
              <polyline points={upper} fill="none" stroke={LINE_BLUE} strokeWidth="1.15" shapeRendering="crispEdges" />
              <polyline points={lower} fill="none" stroke={LINE_BLUE} strokeWidth="1.15" shapeRendering="crispEdges" />
              <polyline points={maRed} fill="none" stroke="#ff0000" strokeWidth="1.1" shapeRendering="crispEdges" />
              <polyline points={basis} fill="none" stroke="#ff7a10" strokeWidth="1.1" shapeRendering="crispEdges" />
              {candles.map((c, i) => (
                <g key={i} shapeRendering="crispEdges">
                  <line x1={Math.round(c.x) + 0.5} x2={Math.round(c.x) + 0.5} y1={c.h} y2={c.l} stroke="#6e6e6e" strokeWidth="1" />
                  {c.k === 'D' ? (
                    <rect x={Math.round(c.x) - 5} y={c.t - 1} width={11} height={3} fill="#7c7c7c" />
                  ) : (
                    <rect x={Math.round(c.x) - 5} y={c.t} width={11} height={Math.max(c.b - c.t, 3)} fill={c.k === 'G' ? '#00ff00' : '#ff0000'} stroke="#6e6e6e" strokeWidth="1" />
                  )}
                </g>
              ))}
              {notes.map((n) => (
                <text key={n.t} x={n.x} y={n.y} fill={n.c} fontFamily="Liberation Sans" fontSize="27" fontWeight={n.b ? 'bold' : 'normal'} letterSpacing={n.b ? 1.7 : 0} textAnchor={n.end ? 'end' : 'start'} dominantBaseline="central">
                  {n.t}
                </text>
              ))}
            </PlotSvg>
            <PlotTitle $ls={0.65} style={{ top: 8 }}>* MXN A0-FX, MEXICO PESO - NEW COMPOSITE, D, 19:00-19:00 (Dynamic)</PlotTitle>
            <PlotTitle $dim style={{ top: 41 }}>Bollinger Bands - MXN A0-FX, D</PlotTitle>
            <PlotTitle $dim style={{ top: 73 }}>Moving Average - MXN A0-FX, D</PlotTitle>
            <Panel>
              {rows.map((r, i) =>
                r.kind === 'h' ? (
                  <PanelHead key={i}>{r.label}</PanelHead>
                ) : (
                  <PanelRow key={i} $color={r.color}>
                    <span>{r.label}</span>
                    <span>{r.value}</span>
                  </PanelRow>
                ),
              )}
            </Panel>
            <Legend>© eSignal, 2016</Legend>
          </Plot>
          <Axis>
            {priceLabels.map(([t, y]) => <AxisLabel key={t} $left={8} style={{ top: y - 132 }}>{t}</AxisLabel>)}
            {priceTags.map((p) => <Tag key={p.t} $bg={p.bg} $fg={p.fg} $pl={13} style={{ top: p.y - 132 }}>{p.t}</Tag>)}
          </Axis>
        </PaneRow>

        <TabRow>
          <TabStrip>
            {tabs.map((t) => (
              <Tab key={t.t} $w={t.w} $active={t.active}>
                {t.t}
                <TabClose>x</TabClose>
              </Tab>
            ))}
          </TabStrip>
        </TabRow>

        <PaneRow $h={328}>
          <Plot>
            <PlotSvg width={3036} height={328} viewBox="4 1331 3036 328">
              {momGridY.map((y) => <line key={y} x1={4} x2={3040} y1={y} y2={y} stroke="#2e2e2e" strokeWidth="1" strokeDasharray="6 5" shapeRendering="crispEdges" />)}
              {gridX.map((x) => <line key={x} x1={x} x2={x} y1={1331} y2={1659} stroke="#2a2a2a" strokeWidth="1" strokeDasharray="7 5" shapeRendering="crispEdges" />)}
              <line x1={2816} x2={2816} y1={1331} y2={1659} stroke="#555" strokeWidth="1" strokeDasharray="7 5" shapeRendering="crispEdges" />
              <line x1={4} x2={3040} y1={1508} y2={1508} stroke="#6a6a6a" strokeWidth="1" strokeDasharray="5 3" shapeRendering="crispEdges" />
              <polyline points={momentum} fill="none" stroke={LINE_BLUE} strokeWidth="1.15" shapeRendering="crispEdges" />
            </PlotSvg>
            <PlotTitle $ls={0.4} style={{ top: 9 }}>* Momentum - MXN A0-FX, D</PlotTitle>
          </Plot>
          <Axis>
            {momLabels.map(([t, y]) => <AxisLabel key={t} $left={4} style={{ top: y - 1331 }}>{t}</AxisLabel>)}
            <Tag $bg="#0096ff" $fg="#ffffff" $pl={19} style={{ top: 1472 - 1331 }}>0.27</Tag>
          </Axis>
        </PaneRow>

        <TimeAxis>
          <Dyn>Dyn</Dyn>
          <DynIcon>R</DynIcon>
          {months.map(([t, x]) => <Month key={t} style={{ left: x - 4 }}>{t}</Month>)}
          <DateTag>30/06/2016</DateTag>
        </TimeAxis>
      </Body>
    </Window>
  );
}
